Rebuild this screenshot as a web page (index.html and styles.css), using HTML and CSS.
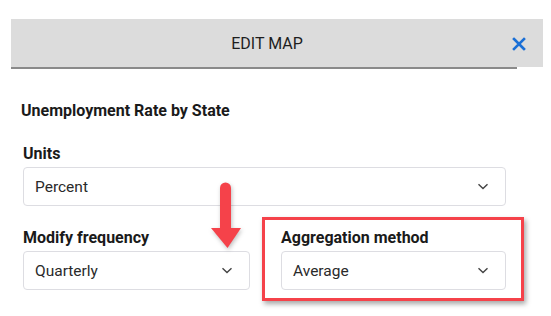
FILE: index.html
```html
<!DOCTYPE html>
<html>
<head>
<title>Edit Map</title>
<link rel="stylesheet" href="styles.css">
</head>
<body>

<div class="dialog">
  <div class="bar">
    <h1>EDIT MAP</h1>
    <button class="close" type="button" aria-label="Close">
      <svg width="14" height="14" viewBox="0 0 14 14"><path d="M2 2 L12 12 M12 2 L2 12" stroke="#1a6fd6" stroke-width="2.6" stroke-linecap="square"/></svg>
    </button>
  </div>
  <div class="rule"></div>

  <div class="content">
    <h2 class="title">Unemployment Rate by State</h2>

    <div class="field">
      <label>Units</label>
      <div class="select wide">
        <span>Percent</span>
        <svg class="chev" width="12" height="7" viewBox="0 0 12 7"><path d="M1.5 1.2 L6 5.6 L10.5 1.2" fill="none" stroke="#444" stroke-width="1.4"/></svg>
      </div>
    </div>

    <div class="row">
      <div class="field">
        <label>Modify frequency</label>
        <div class="select half">
          <span>Quarterly</span>
          <svg class="chev" width="12" height="7" viewBox="0 0 12 7"><path d="M1.5 1.2 L6 5.6 L10.5 1.2" fill="none" stroke="#444" stroke-width="1.4"/></svg>
        </div>
      </div>
      <div class="field right">
        <label>Aggregation method</label>
        <div class="select half">
          <span>Average</span>
          <svg class="chev" width="12" height="7" viewBox="0 0 12 7"><path d="M1.5 1.2 L6 5.6 L10.5 1.2" fill="none" stroke="#444" stroke-width="1.4"/></svg>
        </div>
      </div>
    </div>
  </div>

  <!-- annotations drawn over the form -->
  <div class="callout"></div>
  <svg class="arrow" width="40" height="72" viewBox="0 0 40 72">
    <line x1="17.5" y1="8" x2="17.5" y2="50" stroke="#f5424a" stroke-width="11" stroke-linecap="round"/>
    <polygon points="3,48 33,48 19.5,68" fill="#f5424a"/>
  </svg>
</div>

</body>
</html>
```

FILE: styles.css
```css
body {
  margin: 0;
  background: #fff;
  font-family: Roboto, "Liberation Sans", sans-serif;
  color: #222;
}

.dialog {
  position: relative;
  width: 551px;
  height: 316px;
  overflow: hidden;
}

.bar {
  position: relative;
  display: flex;
  align-items: center;
  margin: 19px 0 0 11px;
  width: 532px;
  height: 48px;
  padding-right: 20px;
  box-sizing: border-box;
  background-color: #dcdcdc;
}

.bar h1 {
  flex: 1;
  margin: 0;
  text-align: center;
  font-size: 16px;
  font-weight: 400;
  color: #1e1e1e;
}

.close {
  position: absolute;
  right: 17px;
  top: 18px;
  width: 14px;
  height: 14px;
  padding: 0;
  border: none;
  background: none;
  cursor: pointer;
}

.close svg {
  display: block;
}

.rule {
  margin-left: 11px;
  width: 506px;
  height: 2px;
  background-color: #8a8a8a;
}

.content {
  padding-left: 23px;
}

.title {
  margin: 32px 0 0 -2px;
  font-size: 16px;
  line-height: 20px;
  font-weight: 700;
  color: #1a1a1a;
}

.field {
  margin-top: 23px;
}

.field label {
  display: block;
  font-size: 16px;
  line-height: 20px;
  font-weight: 700;
  color: #1a1a1a;
}

.select {
  display: flex;
  align-items: center;
  justify-content: space-between;
  margin-top: 3px;
  height: 39px;
  padding: 0 16px 0 11px;
  box-sizing: border-box;
  border: 1px solid #dddde2;
  border-radius: 4px;
  font-size: 15.5px;
  color: #2a2a2a;
}

.select.wide {
  width: 483px;
}

.select.half {
  width: 227px;
}

.row {
  display: flex;
  gap: 31px;
}

.row .field {
  margin-top: 22px;
}

.row .right .select {
  width: 225px;
}

.chev {
  display: block;
}

.callout {
  position: absolute;
  left: 262px;
  top: 217px;
  width: 256px;
  height: 78px;
  border: 3px solid #f5424a;
  box-shadow: 2px 3px 5px rgba(0, 0, 0, 0.35);
}

.arrow {
  position: absolute;
  left: 208px;
  top: 180px;
  filter: drop-shadow(1px 2px 2px rgba(0, 0, 0, 0.25));
}
```
